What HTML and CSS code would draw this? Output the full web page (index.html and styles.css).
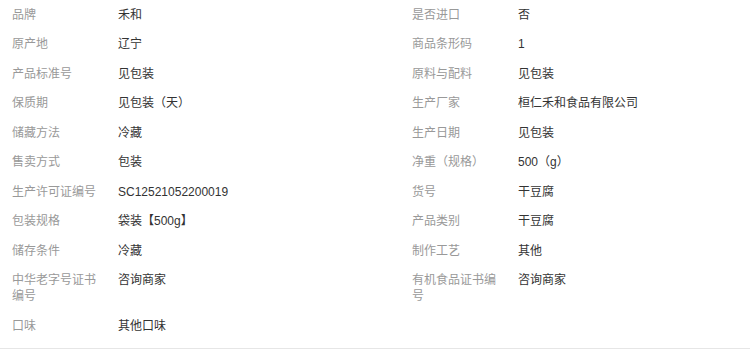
FILE: index.html
```html
<!DOCTYPE html>
<html lang="zh-CN">
<head>
<meta charset="utf-8">
<title>产品参数</title>
<link rel="stylesheet" href="styles.css">
</head>
<body>
<div class="params">
  <ul class="param-list">
    <li class="param"><span class="label">品牌</span><span class="value">禾和</span></li>
    <li class="param"><span class="label">是否进口</span><span class="value">否</span></li>
    <li class="param"><span class="label">原产地</span><span class="value">辽宁</span></li>
    <li class="param"><span class="label">商品条形码</span><span class="value">1</span></li>
    <li class="param"><span class="label">产品标准号</span><span class="value">见包装</span></li>
    <li class="param"><span class="label">原料与配料</span><span class="value">见包装</span></li>
    <li class="param"><span class="label">保质期</span><span class="value">见包装（天）</span></li>
    <li class="param"><span class="label">生产厂家</span><span class="value">桓仁禾和食品有限公司</span></li>
    <li class="param"><span class="label">储藏方法</span><span class="value">冷藏</span></li>
    <li class="param"><span class="label">生产日期</span><span class="value">见包装</span></li>
    <li class="param"><span class="label">售卖方式</span><span class="value">包装</span></li>
    <li class="param"><span class="label">净重（规格）</span><span class="value">500（g）</span></li>
    <li class="param"><span class="label">生产许可证编号</span><span class="value">SC12521052200019</span></li>
    <li class="param"><span class="label">货号</span><span class="value">干豆腐</span></li>
    <li class="param"><span class="label">包装规格</span><span class="value">袋装【500g】</span></li>
    <li class="param"><span class="label">产品类别</span><span class="value">干豆腐</span></li>
    <li class="param"><span class="label">储存条件</span><span class="value">冷藏</span></li>
    <li class="param"><span class="label">制作工艺</span><span class="value">其他</span></li>
    <li class="param"><span class="label">中华老字号证书编号</span><span class="value">咨询商家</span></li>
    <li class="param"><span class="label">有机食品证书编号</span><span class="value">咨询商家</span></li>
    <li class="param"><span class="label">口味</span><span class="value">其他口味</span></li>
  </ul>
</div>
</body>
</html>
```

FILE: styles.css
```css
html, body {
  margin: 0;
  padding: 0;
  background: #ffffff;
}

body {
  font-family: "Liberation Sans", "Noto Sans CJK SC", sans-serif;
  font-size: 12px;
  line-height: 16px;
}

.params {
  width: 750px;
  border-bottom: 1px solid #e6e6e6;
  padding-bottom: 7px;
}

.param-list {
  list-style: none;
  margin: 0;
  padding: 0;
  display: grid;
  grid-template-columns: 400px 350px;
}

.param {
  display: flex;
  padding: 6.5px 0 7px 12px;
}

.label {
  width: 90px;
  margin-right: 16px;
  color: #999999;
  flex-shrink: 0;
}

.value {
  color: #333333;
}
```
